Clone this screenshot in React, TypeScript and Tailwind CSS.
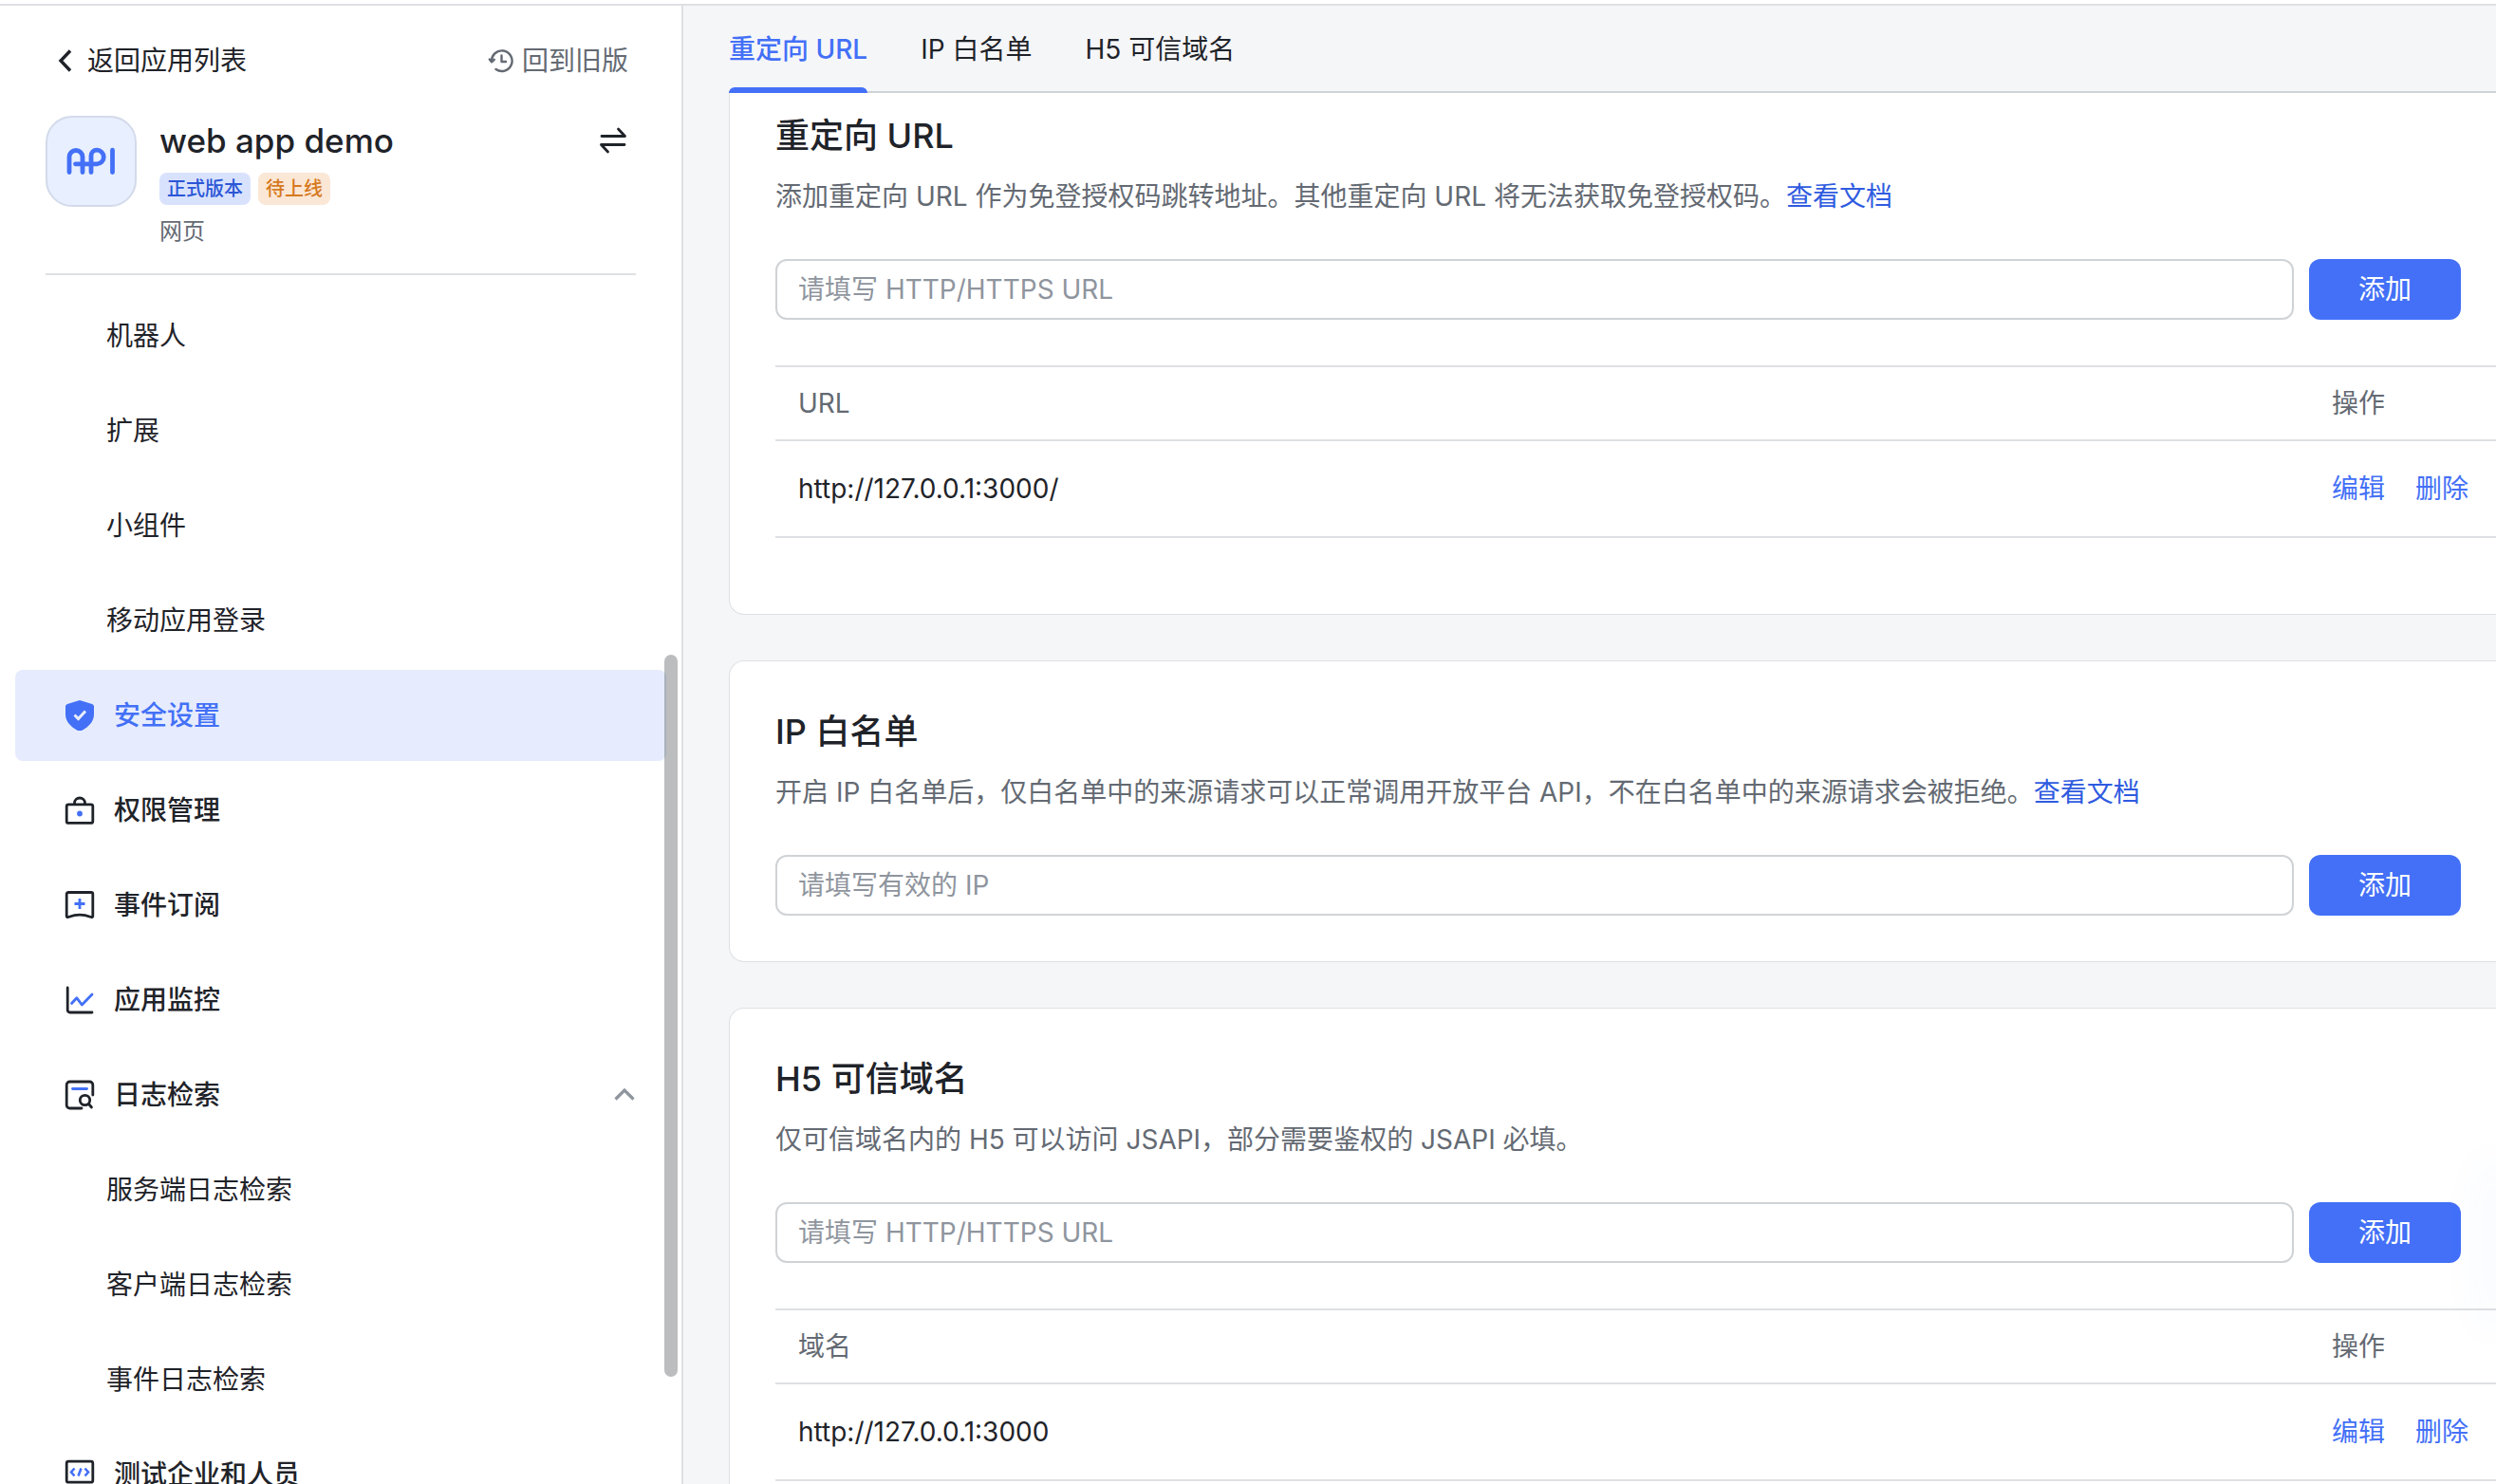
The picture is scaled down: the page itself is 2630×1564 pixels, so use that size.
import { useState } from 'react'

const subItems = ['机器人', '扩展', '小组件', '移动应用登录']
const logItems = ['服务端日志检索', '客户端日志检索', '事件日志检索']
const tabs = ['重定向 URL', 'IP 白名单', 'H5 可信域名']

function ShieldIcon() {
  return (
    <svg viewBox="0 0 32 32" className="w-8 h-8 shrink-0" fill="none">
      <path d="M16 0l13 4c1 .4 2 1.200 2 2.600V15c0 8-6.500 13.500-12.600 16.700-1.500.8-3.300.8-4.800 0C7.500 28.500 1 23 1 15V6.600C1 5.200 2 4.400 3 4z" fill="#4370f7" />
      <path d="M10.500 15.500l4 4 7.500-8" stroke="#e8edfd" strokeWidth="3" />
    </svg>
  )
}

function LockIcon() {
  return (
    <svg viewBox="0 0 32 32" className="w-8 h-8 shrink-0" fill="none" stroke="#1f2329" strokeWidth="2.800">
      <rect x="2.200" y="9.800" width="27.600" height="19.600" rx="2" />
      <path d="M10.500 9.500V8.500a5.500 5.500 0 0 1 11 0v1" />
      <circle cx="16" cy="19.500" r="2.900" fill="#4370f7" stroke="none" />
    </svg>
  )
}

function BookmarkIcon() {
  return (
    <svg viewBox="0 0 32 32" className="w-8 h-8 shrink-0" fill="none" strokeLinejoin="round">
      <path d="M4 2.500h24a1.800 1.800 0 0 1 1.800 1.800V27.500q0 1.500-1.800 1c-4-1.400-7.500-2.400-12-2.400s-8 1-12 2.400q-1.800.5-1.800-1V4.300A1.800 1.800 0 0 1 4 2.500z" stroke="#1f2329" strokeWidth="2.800" />
      <path d="M16 9v11M10.500 14.500h11" stroke="#4370f7" strokeWidth="2.800" />
    </svg>
  )
}

function ChartIcon() {
  return (
    <svg viewBox="0 0 32 32" className="w-8 h-8 shrink-0" fill="none" strokeLinecap="round" strokeLinejoin="round">
      <path d="M3.200 3v23.500a2.500 2.500 0 0 0 2.500 2.500H29" stroke="#1f2329" strokeWidth="2.800" />
      <path d="M7.500 19.500l5.300-5.800 5.500 7.300 10.700-11" stroke="#4370f7" strokeWidth="2.800" />
    </svg>
  )
}

function LogSearchIcon() {
  return (
    <svg viewBox="0 0 32 32" className="w-8 h-8 shrink-0" fill="none" strokeLinecap="round">
      <path d="M18 30H5.500a3.300 3.300 0 0 1-3.300-3.300V5.300A3.300 3.300 0 0 1 5.500 2h21a3.300 3.300 0 0 1 3.300 3.300V16" stroke="#1f2329" strokeWidth="2.800" />
      <path d="M8.500 9.500h15" stroke="#4370f7" strokeWidth="2.800" />
      <circle cx="21.500" cy="21.500" r="5.200" stroke="#1f2329" strokeWidth="2.800" />
      <path d="M25.500 25.500l3 3.500" stroke="#1f2329" strokeWidth="2.800" />
    </svg>
  )
}

function CodeIcon() {
  return (
    <svg viewBox="0 0 32 32" className="w-8 h-8 shrink-0" fill="none">
      <rect x="2.200" y="2.200" width="27.600" height="22" rx="2" stroke="#1f2329" strokeWidth="2.800" />
      <path d="M10.500 9.500L7 13.500l3.500 4M21.500 9.500l3.500 4-3.500 4M17.500 9.500l-3 8" stroke="#4370f7" strokeWidth="2.600" />
    </svg>
  )
}

function ApiLogo() {
  return (
    <div className="flex items-center justify-center w-24 h-24 shrink-0 rounded-[28px] border-2 border-[#d3daea] bg-[#e8effe]">
      <svg viewBox="0 0 52 30" className="w-[52px] h-[30px]" fill="none" stroke="#4370f7" strokeWidth="4.800" strokeLinecap="round" strokeLinejoin="round">
        <path d="M3 26.500V10.500a7 7 0 0 1 14 0v16" />
        <path d="M9.500 17.800h22.500a7.300 7.300 0 0 0 0-14.600c-3.500 0-6 2.500-6 6v17.300" />
        <path d="M48.500 3.200v23.300" />
      </svg>
    </div>
  )
}

function SubItem({ label }: { label: string }) {
  return (
    <a href="#" className="flex items-center h-24 pl-24 rounded-lg text-[28px]">{label}</a>
  )
}

function NavItem({ label, icon, active = false, open = false }: {
  label: string
  icon: React.ReactNode
  active?: boolean
  open?: boolean
}) {
  return (
    <a
      href="#"
      className={`flex items-center gap-5 h-24 pl-[52px] pr-8 rounded-lg text-[28px] font-medium ${active ? 'bg-[#e6ecfd] text-[#4370f7]' : ''}`}
    >
      {icon}
      <span className="flex-1">{label}</span>
      {open && (
        <svg viewBox="0 0 24 24" className="w-6 h-6" fill="none" stroke="#8f959e" strokeWidth="3.200">
          <path d="M2.500 16.500L12 7l9.500 9.500" />
        </svg>
      )}
    </a>
  )
}

function Sidebar() {
  return (
    <aside className="relative flex flex-col w-[720px] shrink-0 border-r-2 border-[#dee0e3] bg-white">
      {/* Header */}
      <div className="flex items-center justify-between pl-[60px] pr-14 pt-9 text-[28px] leading-[44px]">
        <a href="#" className="flex items-center gap-4">
          <svg viewBox="0 0 16 24" className="w-4 h-6" fill="none" stroke="#1f2329" strokeWidth="3.400">
            <path d="M14 1.500L4 12l10 10.500" />
          </svg>
          返回应用列表
        </a>
        <a href="#" className="flex items-center gap-2 text-[#646a73]">
          <svg viewBox="0 0 28 28" className="w-7 h-7" fill="none" stroke="#646a73" strokeWidth="2.400" strokeLinecap="round" strokeLinejoin="round">
            <path d="M4 15a10.800 10.800 0 1 1 4.500 8" />
            <path d="M1.800 12.500L4 15.300l2.800-2.500" />
            <path d="M14.500 8.500V15h4.500" />
          </svg>
          回到旧版
        </a>
      </div>

      {/* App info */}
      <div className="flex gap-6 mx-12 pt-9 pb-6 border-b-2 border-[#dee0e3]">
        <ApiLogo />
        <div className="flex-1 min-w-0">
          <div className="flex items-center justify-between pr-2">
            <h1 className="text-[35px] leading-[52px] font-medium">web app demo</h1>
            <button aria-label="切换应用">
              <svg viewBox="0 0 32 32" className="w-8 h-8" fill="none" stroke="#1f2329" strokeWidth="2.800" strokeLinecap="round" strokeLinejoin="round">
                <path d="M4 11.500h24.500l-7-7.500M28 20.500H3.500l7 7.500" />
              </svg>
            </button>
          </div>
          <div className="flex gap-2 mt-2 text-[20px] leading-[34px] font-medium">
            <span className="px-2 rounded-lg bg-[#d9e2fd] text-[#2b56d6]">正式版本</span>
            <span className="px-2 rounded-lg bg-[#fbe7d6] text-[#d67a20]">待上线</span>
          </div>
          <p className="mt-2 text-[24px] leading-[40px] text-[#646a73]">网页</p>
        </div>
      </div>

      {/* Menu */}
      <nav className="flex flex-col gap-1 pt-4 pl-4 pr-4">
        {subItems.map(s => <SubItem key={s} label={s} />)}
        <NavItem label="安全设置" icon={<ShieldIcon />} active />
        <NavItem label="权限管理" icon={<LockIcon />} />
        <NavItem label="事件订阅" icon={<BookmarkIcon />} />
        <NavItem label="应用监控" icon={<ChartIcon />} />
        <NavItem label="日志检索" icon={<LogSearchIcon />} open />
        {logItems.map(s => <SubItem key={s} label={s} />)}
        <NavItem label="测试企业和人员" icon={<CodeIcon />} />
      </nav>

      {/* Scrollbar thumb */}
      <div className="absolute right-1 top-[684px] w-3.5 h-[761px] rounded-full bg-[#1f2329]/30" />
    </aside>
  )
}

function SettingCard({ id, title, desc, placeholder, doc = false, column, rows = [] }: {
  id: string
  title: string
  desc: string
  placeholder: string
  doc?: boolean
  column?: string
  rows?: string[]
}) {
  return (
    <section className="pl-12 py-12 bg-white border border-r-0 border-[#dee0e3] rounded-l-2xl">
      <h2 className="text-[36px] leading-[52px] font-medium">{title}</h2>
      <p className="mt-4 text-[28px] leading-[44px] text-[#646a73]">
        <label htmlFor={id}>{desc}</label>
        {doc && <a href="#" className="text-[#2f5be0]">查看文档</a>}
      </p>
      <div className="flex gap-4 mt-11 mr-[37px]">
        <input
          id={id}
          type="text"
          placeholder={placeholder}
          className="flex-1 h-16 px-[22px] border-2 border-[#d0d3d6] rounded-xl text-[28px] placeholder:text-[#8f959e]"
        />
        <button className="w-40 h-16 rounded-xl bg-[#4370f7] text-white text-[28px]">添加</button>
      </div>
      {column && (
        <table className="w-full mt-12 mb-8 text-[28px] text-left border-t-2 border-[#dee0e3]">
          <thead>
            <tr className="h-[78px] border-b-2 border-[#dee0e3] text-[#646a73]">
              <th className="px-6 font-normal">{column}</th>
              <th className="w-[197px] pl-6 font-normal">操作</th>
            </tr>
          </thead>
          <tbody>
            {rows.map(r => (
              <tr key={r} className="h-[102px] border-b-2 border-[#dee0e3]">
                <td className="px-6">{r}</td>
                <td className="pl-6">
                  <div className="flex gap-8 text-[#4370f7]">
                    <button>编辑</button>
                    <button>删除</button>
                  </div>
                </td>
              </tr>
            ))}
          </tbody>
        </table>
      )}
    </section>
  )
}

export default function App() {
  const [tab, setTab] = useState(tabs[0])

  return (
    <div className="flex flex-col h-screen overflow-hidden bg-white font-[Inter,'Noto_Sans_CJK_SC',sans-serif] text-[#1f2329]">
      <div className="mt-1 h-0.5 shrink-0 bg-[#dee0e3]" />
      <div className="flex flex-1 min-h-0">
        <Sidebar />
        <main className="relative flex flex-col flex-1 min-w-0 pl-12 bg-[#f5f6f8]">
          <div className="flex gap-14 h-[92px] shrink-0 border-b-2 border-[#d0d3d6] text-[28px]">
            {tabs.map(t => (
              <button
                key={t}
                onClick={() => setTab(t)}
                className={`relative h-[92px] ${t === tab ? 'font-medium text-[#4370f7]' : ''}`}
              >
                {t}
                {t === tab && <span className="absolute left-0 right-0 bottom-0 h-1.5 rounded-t-md bg-[#4370f7]" />}
              </button>
            ))}
          </div>
          <div className="flex-1 min-h-0 overflow-hidden">
            <div className="flex flex-col gap-12 -mt-[30px]">
              <SettingCard
                id="redirect"
                title="重定向 URL"
                desc="添加重定向 URL 作为免登授权码跳转地址。其他重定向 URL 将无法获取免登授权码。"
                placeholder="请填写 HTTP/HTTPS URL"
                doc
                column="URL"
                rows={['http://127.0.0.1:3000/']}
              />
              <SettingCard
                id="ip"
                title="IP 白名单"
                desc="开启 IP 白名单后，仅白名单中的来源请求可以正常调用开放平台 API，不在白名单中的来源请求会被拒绝。"
                placeholder="请填写有效的 IP"
                doc
              />
              <SettingCard
                id="h5"
                title="H5 可信域名"
                desc="仅可信域名内的 H5 可以访问 JSAPI，部分需要鉴权的 JSAPI 必填。"
                placeholder="请填写 HTTP/HTTPS URL"
                column="域名"
                rows={['http://127.0.0.1:3000']}
              />
            </div>
          </div>
          {/* Glow of the help button docked past the right edge */}
          <div className="absolute right-0 bottom-[180px] w-0 h-36 rounded-full pointer-events-none shadow-[0_0_48px_12px_rgba(67,112,247,0.06)]" />
        </main>
      </div>
    </div>
  )
}
